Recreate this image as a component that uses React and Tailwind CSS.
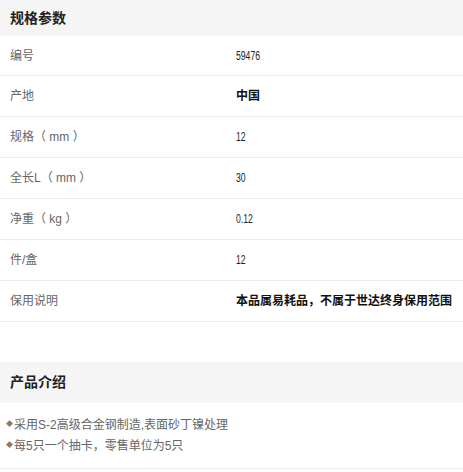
const specs = [
  { label: "编号", value: "59476" },
  { label: "产地", value: "中国", bold: true },
  { label: "规格（ mm ）", value: "12" },
  { label: "全长L（ mm ）", value: "30" },
  { label: "净重（ kg ）", value: "0.12" },
  { label: "件/盒", value: "12" },
  { label: "保用说明", value: "本品属易耗品，不属于世达终身保用范围", bold: true },
];

const intro = ["采用S-2高级合金钢制造,表面砂丁镍处理", "每5只一个抽卡，零售单位为5只"];

const cjk = "font-['Liberation_Sans','Noto_Sans_CJK_SC',sans-serif]";

export default function App() {
  return (
    <div className={`w-[463px] bg-white ${cjk}`}>
      {/* Specs */}
      <div className="h-[36px] bg-[#f5f5f5] flex items-center pl-[10px]">
        <h2 className="text-[14px] font-bold text-[#222]">规格参数</h2>
      </div>
      <div>
        {specs.map((row, i) => (
          <div
            key={row.label}
            className={`flex ${i === 0 ? "h-[40px]" : "h-[41px]"} items-center border-b border-[#ececec]`}
          >
            <div className="w-[236px] pl-[10px] text-[12px] text-[#666]">{row.label}</div>
            {row.bold ? (
              <div className="text-[12px] font-bold text-[#111]">{row.value}</div>
            ) : (
              <div className="text-[12px] text-[#222]">
                <span className="inline-block origin-left scale-x-[0.72]">{row.value}</span>
              </div>
            )}
          </div>
        ))}
      </div>

      <div className="h-[40px]"></div>

      {/* Intro */}
      <div className="h-[41px] bg-[#f5f5f5] flex items-center pl-[10px]">
        <h2 className="text-[14px] font-bold text-[#222]">产品介绍</h2>
      </div>
      <ul className="pt-[11px] pb-[12px] pl-[6px] border-b border-[#ececec]">
        {intro.map((t) => (
          <li key={t} className="flex items-center h-[21px] text-[12px] text-[#666]">
            <span className="text-[7px] text-[#8a7a6a] mr-[1px]">◆</span>
            {t}
          </li>
        ))}
      </ul>
    </div>
  );
}
